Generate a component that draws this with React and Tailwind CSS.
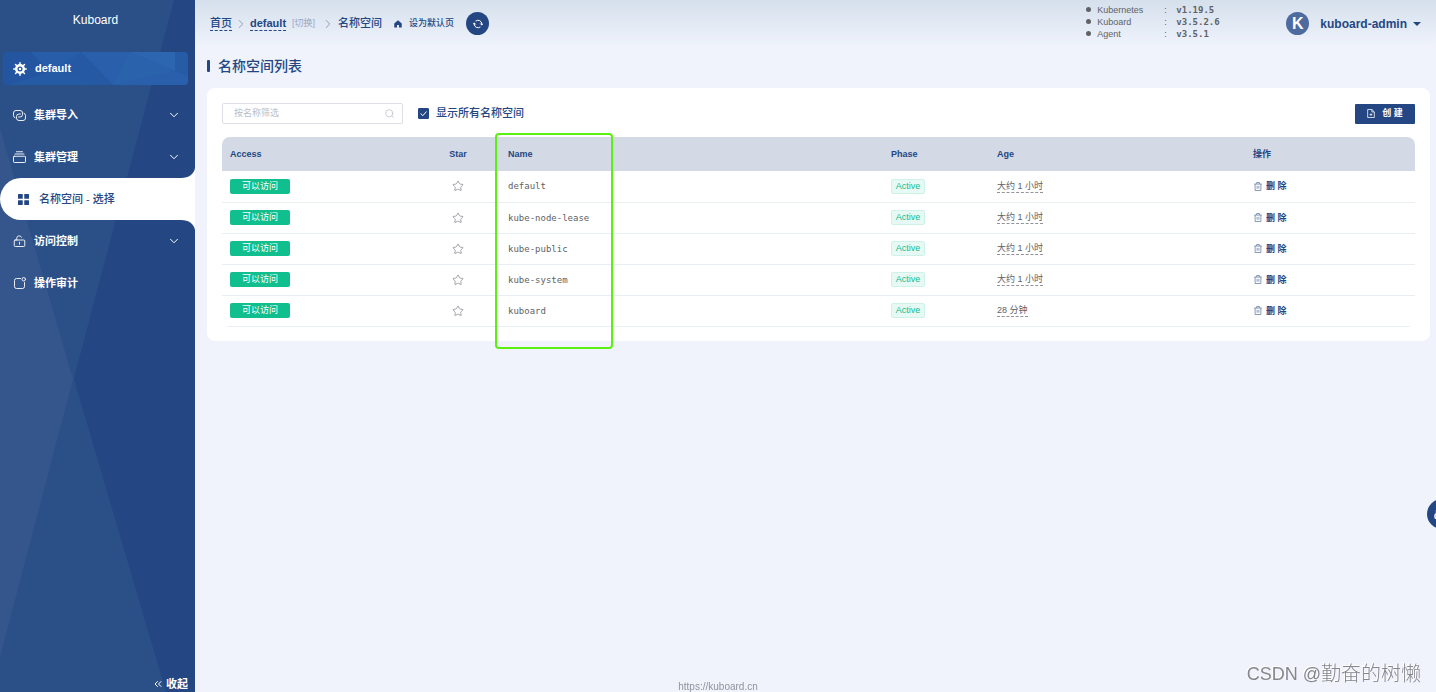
import { useState } from "react";
import { ChevronDown, ChevronRight, ChevronsLeft, Star } from "lucide-react";

const menu = [
  { id: "import", label: "集群导入", icon: LinkIcon, expandable: true },
  { id: "manage", label: "集群管理", icon: StackIcon, expandable: true },
  { id: "namespace", label: "名称空间 - 选择", icon: GridIcon, active: true },
  { id: "access", label: "访问控制", icon: LockIcon, expandable: true },
  { id: "audit", label: "操作审计", icon: AuditIcon },
];

const versions = [
  { name: "Kubernetes", version: "v1.19.5" },
  { name: "Kuboard", version: "v3.5.2.6" },
  { name: "Agent", version: "v3.5.1" },
];

const namespaces = [
  { name: "default", age: "大约 1 小时" },
  { name: "kube-node-lease", age: "大约 1 小时" },
  { name: "kube-public", age: "大约 1 小时" },
  { name: "kube-system", age: "大约 1 小时" },
  { name: "kuboard", age: "28 分钟" },
];

// icons
function HelmIcon() {
  return (
    <svg viewBox="0 0 28 28" className="size-3.5 shrink-0" fill="none" stroke="currentColor">
      <circle cx="14" cy="14" r="7.5" strokeWidth="5" />
      <circle cx="14" cy="14" r="2.5" fill="currentColor" stroke="none" />
      <path
        d="M14 5V1.500M14 26.500V23M5 14H1.500M26.500 14H23M7.600 7.600 5 5M23 23l-2.600-2.600M7.600 20.400 5 23M23 5l-2.600 2.600"
        strokeWidth="3"
        strokeLinecap="round"
      />
    </svg>
  );
}

function LinkIcon() {
  return (
    <svg viewBox="0 0 26 22" className="h-[11px] w-[13px] shrink-0" fill="none" stroke="currentColor" strokeWidth="1.8" strokeLinecap="round">
      <path d="M4 15.500A4.500 4.500 0 0 1 1 11V6a5 5 0 0 1 5-5h8a5 5 0 0 1 5 5v3a5 5 0 0 1-5 5h-3" />
      <path d="M22 6.500A4.500 4.500 0 0 1 25 11v5a5 5 0 0 1-5 5h-8a5 5 0 0 1-5-5v-3a5 5 0 0 1 5-5h3" />
    </svg>
  );
}

function StackIcon() {
  return (
    <svg viewBox="0 0 26 24" className="h-3 w-[13px] shrink-0" fill="none" stroke="currentColor" strokeWidth="1.8" strokeLinecap="round">
      <path d="M7 1.500h12M4 6h18" />
      <rect x="1" y="10.500" width="24" height="12.500" rx="1.500" />
    </svg>
  );
}

function GridIcon() {
  return (
    <svg viewBox="0 0 22 22" className="size-[11px] shrink-0" fill="currentColor">
      <rect width="9.500" height="9.500" rx="1" />
      <rect x="12.500" width="9.500" height="9.500" rx="1" />
      <rect y="12.500" width="9.500" height="9.500" rx="1" />
      <rect x="12.500" y="12.500" width="9.500" height="9.500" rx="1" />
    </svg>
  );
}

function LockIcon() {
  return (
    <svg viewBox="0 0 26 24" className="h-3 w-[13px] shrink-0" fill="none" stroke="currentColor" strokeWidth="1.8" strokeLinecap="round">
      <rect x="2.500" y="10" width="21" height="13" rx="2" />
      <path d="M7.500 10V6.500a5 5 0 0 1 9.500-2M13 14.500v4" />
    </svg>
  );
}

function AuditIcon() {
  return (
    <svg viewBox="0 0 24 24" className="ml-px size-3 shrink-0" fill="none" stroke="currentColor" strokeWidth="1.8" strokeLinecap="round">
      <path d="M13 3H5a4 4 0 0 0-4 4v12a4 4 0 0 0 4 4h12a4 4 0 0 0 4-4v-8" />
      <circle cx="19.500" cy="4.500" r="3.500" />
    </svg>
  );
}

function HomeIcon() {
  return (
    <svg viewBox="0 0 16 16" className="size-2" fill="currentColor">
      <path d="M8 .500 .500 7v8H6v-5h4v5h5.500V7z" />
    </svg>
  );
}

function RefreshIcon() {
  return (
    <svg viewBox="0 0 24 24" className="size-2.5" fill="none" stroke="currentColor" strokeWidth="2.400" strokeLinecap="round" strokeLinejoin="round">
      <path d="M7 4.500A9 9 0 0 1 21 12v2M3 10v2a9 9 0 0 0 14 7.500" />
      <path d="m18 11.500 3 3 2.500-3M.500 12.500l2.500-3 3 3" />
    </svg>
  );
}

function SearchIcon() {
  return (
    <svg viewBox="0 0 20 20" className="size-[9px]" fill="none" stroke="currentColor" strokeWidth="1.800" strokeLinecap="round">
      <circle cx="9.500" cy="9.500" r="8" />
      <path d="m15.500 15.500 3 3" />
    </svg>
  );
}

function DocAddIcon() {
  return (
    <svg viewBox="0 0 18 20" className="h-[9px] w-2" fill="none" stroke="currentColor" strokeWidth="1.700">
      <path d="M11 1H1.500v18h15V6.500zM11 1v5.500h5.500M9 9.500v6M6 12.500h6" />
    </svg>
  );
}

function TrashIcon() {
  return (
    <svg viewBox="0 0 18 20" className="h-[9px] w-2 opacity-80" fill="none" stroke="currentColor" strokeWidth="1.500">
      <path d="M.500 4.500h17M2.500 4.500V19h13V4.500M6 4.500V1h6v3.500M7 8.500v6.500M11 8.500v6.500" />
    </svg>
  );
}

function Sidebar() {
  return (
    <aside className="relative isolate flex w-[195px] shrink-0 flex-col bg-[#244783] text-white">
      <svg viewBox="0 0 195 692" preserveAspectRatio="none" className="absolute inset-0 -z-10 h-full w-full" aria-hidden="true">
        <path d="M0 0h174L0 657z" fill="#2b5087" />
        <path d="M0 128 166 692H0z" fill="#2b5087" />
        <path d="M0 128 73 379 0 657z" fill="#35568c" />
      </svg>

      <h1 className="mt-2 mr-1 text-center text-xs leading-6 font-medium">Kuboard</h1>

      {/* current cluster */}
      <a href="#cluster" className="relative isolate mt-5 mr-[7px] ml-[3px] flex h-[33px] items-center gap-2 overflow-hidden rounded-sm bg-[#255aa5] pl-2.5 text-[11px] font-bold">
        <svg viewBox="0 0 185 33" preserveAspectRatio="none" className="absolute inset-0 -z-10 h-full w-full" aria-hidden="true">
          <path d="M0 0h28l18 20-40 13H0z" fill="#2455a0" />
          <path d="M28 0h50L46 20z" fill="#285ea9" />
          <path d="M78 0h48l59 24v9h-75z" fill="#295fab" />
          <path d="M78 0 60 20l30 13h20z" fill="#2659a4" />
          <path d="M126 0h46v19z" fill="#2d66b0" />
          <path d="m126 0-16 33 62-14z" fill="#2a62ac" />
          <path d="M172 0h13v24l-13-5z" fill="#265ba5" />
        </svg>
        <HelmIcon />
        default
      </a>

      <nav className="mt-[9px]">
        {menu.map((item) => {
          const Icon = item.icon;

          if (item.active) {
            return (
              <a
                key={item.id}
                href={`#${item.id}`}
                className="relative flex h-[42px] items-center gap-2.5 rounded-l-full bg-white pl-[18px] text-[11px] font-medium text-[#244783]"
              >
                {/* curved joints with the page */}
                <svg viewBox="0 0 14 10" className="absolute right-0 -top-2.5 h-2.5 w-3.5 text-white" fill="currentColor" aria-hidden="true">
                  <path d="M14 0C13 6 8 10 0 10h14z" />
                </svg>
                <svg viewBox="0 0 14 10" className="absolute right-0 -bottom-2.5 h-2.5 w-3.5 text-white" fill="currentColor" aria-hidden="true">
                  <path d="M0 0c8 0 13 4 14 10V0z" />
                </svg>
                <Icon />
                {item.label}
              </a>
            );
          }

          return (
            <button
              key={item.id}
              className="flex h-[42px] w-full items-center gap-2 pr-3.5 pl-[13px] text-[11px] font-bold"
            >
              <Icon />
              <span>{item.label}</span>
              {item.expandable && <ChevronDown className="ml-auto size-3.5" strokeWidth={1.7} />}
            </button>
          );
        })}
      </nav>

      <button className="mt-auto mr-[7px] flex items-center gap-0.5 self-end text-[11px] leading-4 font-bold">
        <ChevronsLeft className="size-3" strokeWidth={2} />
        收起
      </button>
    </aside>
  );
}

function Header() {
  return (
    <header className="flex h-[47px] items-center bg-linear-to-b from-[#d5e0ec] to-[#f0f3fc] pr-[15px] pl-[15px]">
      <nav className="flex items-center text-[11px] font-medium">
        <a href="#home" className="border-b border-dashed border-[#244783] leading-3.5">
          首页
        </a>
        <ChevronRight className="mx-0.5 size-3.5 text-[#8d9dbb]" strokeWidth={1.7} />
        <a href="#default" className="border-b border-dashed border-[#244783] leading-3.5 font-bold">
          default
        </a>
        <a href="#switch" className="ml-1.5 text-[9px] font-normal text-[#99a8c4]">
          [切换]
        </a>
        <ChevronRight className="mr-[3px] ml-1.5 size-3.5 text-[#8d9dbb]" strokeWidth={1.7} />
        <span>名称空间</span>
        <button className="ml-3 flex items-center gap-[7px] text-[9px]">
          <HomeIcon />
          设为默认页
        </button>
        <button aria-label="刷新" className="ml-3 flex size-[23px] items-center justify-center rounded-full bg-[#244783] text-white">
          <RefreshIcon />
        </button>
      </nav>

      <ul className="mr-[65px] ml-auto pb-1 text-[9px] leading-3 text-[#606266]">
        {versions.map((item) => (
          <li key={item.name} className="flex items-center">
            <span className="mr-1.5 size-[5px] rounded-full bg-current" />
            <span className="w-[67px]">{item.name}</span>
            <span className="w-3">:</span>
            <span className="w-[45px] font-['DejaVu_Sans_Mono',monospace] font-bold">{item.version}</span>
          </li>
        ))}
      </ul>

      <button className="flex items-center text-xs font-bold">
        <span className="mr-[11px] flex size-[23px] items-center justify-center rounded-full bg-[#4d6b9f] text-base text-white">
          K
        </span>
        kuboard-admin
        <svg viewBox="0 0 16 8" className="ml-1.5 h-1 w-2" fill="currentColor">
          <path d="M0 0h16L8 8z" />
        </svg>
      </button>
    </header>
  );
}

function NamespaceTable() {
  return (
    <div className="mt-[13px] overflow-hidden rounded-lg">
      <table className="w-full table-fixed text-left text-[9px] leading-3">
        <colgroup>
          <col className="w-[194px]" />
          <col className="w-[84px]" />
          <col className="w-[383px]" />
          <col className="w-[106px]" />
          <col className="w-[256px]" />
          <col className="w-[170px]" />
        </colgroup>
        <thead>
          <tr className="h-[34px] bg-[#d3d9e5] font-bold">
            <th className="px-2">Access</th>
            <th className="px-2 text-center">Star</th>
            <th className="px-2">Name</th>
            <th className="px-2">Phase</th>
            <th className="px-2">Age</th>
            <th className="px-2">操作</th>
          </tr>
        </thead>
        <tbody>
          {namespaces.map((ns) => (
            <tr key={ns.name} className="h-[31px] border-b border-[#e9edf4] text-[#606266]">
              <td className="px-2">
                <span className="block h-[15px] w-[60px] rounded-[2px] bg-[#10be8e] text-center leading-[15px] text-white">
                  可以访问
                </span>
              </td>
              <td className="px-2">
                <button aria-label="收藏" className="mx-auto block text-[#909399]">
                  <Star className="size-3" strokeWidth={1.7} />
                </button>
              </td>
              <td className="px-2 font-['DejaVu_Sans_Mono',monospace]">{ns.name}</td>
              <td className="px-2">
                <span className="block h-[15px] w-[34px] rounded-[2px] border border-[#cff2e8] bg-[#e7f9f4] text-center leading-[13px] text-[#10be8e]">
                  Active
                </span>
              </td>
              <td className="px-2">
                <span className="inline-block border-b border-dashed border-[#909399]">{ns.age}</span>
              </td>
              <td className="px-2">
                <button className="flex items-center gap-1 pl-px font-bold text-[#244783]">
                  <TrashIcon />
                  删 除
                </button>
              </td>
            </tr>
          ))}
        </tbody>
      </table>
    </div>
  );
}

export default function App() {
  const [filter, setFilter] = useState("");
  const [showAll, setShowAll] = useState(true);

  return (
    <div className="flex min-h-screen overflow-hidden bg-[#f0f3fc] font-['Liberation_Sans','Noto_Sans_CJK_SC',sans-serif] text-[#244783]">
      <Sidebar />

      <main className="min-w-0 flex-1">
        <Header />

        <h2 className="mt-[9px] ml-3 flex items-center gap-2 text-sm leading-5 font-medium">
          <span className="h-3 w-[3px] rounded-[1px] bg-[#244783]" />
          名称空间列表
        </h2>

        <section className="relative mt-3 mr-1.5 ml-3 rounded-lg bg-white px-[15px] pt-[15px] pb-3.5">
          <div className="flex items-center">
            <div className="flex h-[21px] w-[181px] items-center rounded-[2px] border border-[#dcdfe6] pr-2 pl-[11px] text-[#c0c4cc]">
              <input
                aria-label="按名称筛选"
                placeholder="按名称筛选"
                value={filter}
                onChange={(e) => setFilter(e.target.value)}
                className="min-w-0 flex-1 text-[9px] text-[#606266] outline-none placeholder:text-[#b9bdc6]"
              />
              <SearchIcon />
            </div>

            <label className="ml-[15px] flex items-center gap-[7px] text-[11px] font-medium">
              <span className="grid size-[11px]">
                <input
                  type="checkbox"
                  checked={showAll}
                  onChange={(e) => setShowAll(e.target.checked)}
                  className="col-start-1 row-start-1 size-[11px] appearance-none rounded-[1px] border border-[#244783] checked:bg-[#244783]"
                />
                <svg viewBox="0 0 22 22" className="pointer-events-none col-start-1 row-start-1 size-[11px] text-white" fill="none" stroke="currentColor" strokeWidth="2">
                  <path d="m5.500 11 4 4.500 7.500-8.500" />
                </svg>
              </span>
              显示所有名称空间
            </label>

            <button className="ml-auto flex h-5 w-[60px] items-center justify-center gap-[7px] rounded-[1px] bg-[#244783] text-[9px] font-bold text-white">
              <DocAddIcon />
              创 建
            </button>
          </div>

          <NamespaceTable />

          {/* highlight around the Name column */}
          <div className="pointer-events-none absolute top-[45px] left-[288px] h-[216px] w-[118px] rounded border-2 border-[#5bf00f]" />
        </section>
      </main>

      <footer className="fixed inset-x-0 bottom-0 text-center text-[10px] leading-none text-[#909399]">
        <a href="#kuboard">https://kuboard.cn</a>
      </footer>

      <button aria-label="客服" className="fixed top-[499px] -right-[21px] flex size-[30px] items-center rounded-full bg-[#244783] pl-[7px] text-white">
        <svg viewBox="0 0 16 16" className="size-4" fill="none" stroke="currentColor" strokeWidth="1.500">
          <path d="M2.500 8V6a5.500 5.500 0 0 1 11 0v2M2.500 8a1.500 1.500 0 0 0-1.500 1.500v1.500a1.500 1.500 0 0 0 3 0V8zM3 12.500c1 1.500 2.500 2 4 2" />
        </svg>
      </button>

      <p className="fixed right-[15px] bottom-1 flex items-center text-xl leading-7 text-[#85878c] [text-shadow:-1px_-1px_0_#ffffff]">
        <span className="text-lg leading-7">CSDN @</span>
        <span className="font-light">勤奋的树懒</span>
      </p>
    </div>
  );
}
